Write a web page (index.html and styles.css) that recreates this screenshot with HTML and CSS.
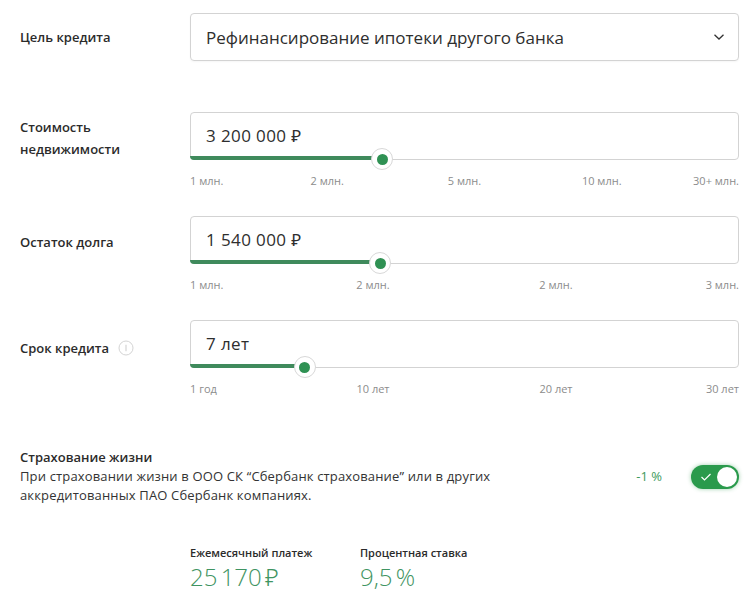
FILE: index.html
```html
<!DOCTYPE html>
<html lang="ru">
<head>
<meta charset="utf-8">
<link rel="stylesheet" href="styles.css">
</head>
<body>
<div class="calc">
  <div class="row row-select">
    <div class="label">Цель кредита</div>
    <div class="field">
      <div class="box select">
        <span class="value">Рефинансирование ипотеки другого банка</span>
        <svg class="chevron" width="12" height="8" viewBox="0 0 12 8"><path d="M1.5 1.8 L6 6 L10.5 1.8" fill="none" stroke="#333" stroke-width="1.3"/></svg>
      </div>
    </div>
  </div>

  <div class="row row-slider">
    <div class="label">Стоимость<br>недвижимости</div>
    <div class="field">
      <div class="box slider">
        <span class="value">3 200 000 ₽</span>
        <div class="fill" style="width:35%"></div>
        <div class="thumb" style="left:35%"></div>
      </div>
      <div class="ticks">
        <span class="tick">1 млн.</span>
        <span class="tick">2 млн.</span>
        <span class="tick">5 млн.</span>
        <span class="tick">10 млн.</span>
        <span class="tick">30+ млн.</span>
      </div>
    </div>
  </div>

  <div class="row row-slider">
    <div class="label">Остаток долга</div>
    <div class="field">
      <div class="box slider">
        <span class="value">1 540 000 ₽</span>
        <div class="fill" style="width:34.6%"></div>
        <div class="thumb" style="left:34.6%"></div>
      </div>
      <div class="ticks">
        <span class="tick">1 млн.</span>
        <span class="tick">2 млн.</span>
        <span class="tick">2 млн.</span>
        <span class="tick">3 млн.</span>
      </div>
    </div>
  </div>

  <div class="row row-slider">
    <div class="label label-info">Срок кредита
      <svg class="info" width="16" height="16" viewBox="0 0 16 16"><circle cx="8" cy="8" r="7" fill="none" stroke="#d4d4d4" stroke-width="1"/><path d="M8 4.8 V11.2" stroke="#d4d4d4" stroke-width="1.2"/></svg>
    </div>
    <div class="field">
      <div class="box slider">
        <span class="value">7 лет</span>
        <div class="fill" style="width:20.8%"></div>
        <div class="thumb" style="left:20.8%"></div>
      </div>
      <div class="ticks">
        <span class="tick">1 год</span>
        <span class="tick">10 лет</span>
        <span class="tick">20 лет</span>
        <span class="tick">30 лет</span>
      </div>
    </div>
  </div>

  <div class="insurance">
    <div class="ins-text">
      <div class="ins-title">Страхование жизни</div>
      <div class="ins-desc">При страховании жизни в ООО СК “Сбербанк страхование” или в других аккредитованных ПАО Сбербанк компаниях.</div>
    </div>
    <div class="discount">-1 %</div>
    <div class="toggle">
      <svg class="check" width="12" height="10" viewBox="0 0 12 10"><path d="M1.5 5 L4.5 8 L10.5 2" fill="none" stroke="#fff" stroke-width="1.2"/></svg>
      <span class="knob"></span>
    </div>
  </div>

  <div class="results">
    <div class="result">
      <div class="res-label">Ежемесячный платеж</div>
      <div class="res-value">25 170 ₽</div>
    </div>
    <div class="result">
      <div class="res-label">Процентная ставка</div>
      <div class="res-value">9,5 %</div>
    </div>
  </div>
</div>
</body>
</html>
```

FILE: styles.css
```css
html, body {
  margin: 0;
  padding: 0;
  background: #fff;
}
body {
  font-family: "Open Sans", "Noto Sans", sans-serif;
  color: #333;
}
.calc {
  width: 719px;
  padding: 13px 0 0 20px;
}
.row {
  display: flex;
}
.row-select {
  margin-bottom: 51px;
}
.row-slider {
  margin-bottom: 28px;
}
.label {
  width: 170px;
  height: 48px;
  display: flex;
  align-items: center;
  font-size: 13px;
  font-weight: 600;
  line-height: 22px;
  color: #2b2b2b;
  padding-top: 3px;
  box-sizing: border-box;
}
.row-select .label {
  padding-top: 0;
}
.label-info {
  gap: 9px;
  padding-top: 7px;
}
.info {
  flex: none;
}
.field {
  width: 549px;
}
.box {
  position: relative;
  height: 48px;
  box-sizing: border-box;
  border: 1px solid #d3d3d3;
  border-radius: 4px;
  display: flex;
  align-items: center;
  padding: 0 15px;
}
.value {
  font-size: 17px;
  color: #2e2e2e;
}
.slider .value {
  margin-top: -2px;
  letter-spacing: 0.4px;
}
.select {
  justify-content: space-between;
  padding-right: 13px;
  box-shadow: 0 1px 2px rgba(0,0,0,0.04);
}
.fill {
  position: absolute;
  left: -1px;
  bottom: -1px;
  height: 4px;
  background: #3f8a5c;
  border-bottom-left-radius: 4px;
}
.thumb {
  position: absolute;
  bottom: -11px;
  width: 22px;
  height: 22px;
  margin-left: -11px;
  box-sizing: border-box;
  border: 1px solid #d8d8d8;
  border-radius: 50%;
  background: #fff;
  display: flex;
  align-items: center;
  justify-content: center;
}
.thumb::after {
  content: "";
  width: 11px;
  height: 11px;
  border-radius: 50%;
  background: #2f9153;
}
.ticks {
  display: flex;
  justify-content: space-between;
  margin-top: 14px;
  height: 14px;
}
.tick {
  width: 0;
  display: flex;
  justify-content: center;
  white-space: nowrap;
  font-size: 11px;
  line-height: 14px;
  color: #8c8c8c;
}
.tick:first-child {
  justify-content: flex-start;
}
.tick:last-child {
  justify-content: flex-end;
}
.insurance {
  display: flex;
  align-items: center;
  margin-top: 52px;
}
.ins-text {
  flex: 1;
}
.ins-title {
  font-size: 13px;
  font-weight: 600;
  line-height: 19px;
  color: #2b2b2b;
}
.ins-desc {
  font-size: 13px;
  line-height: 19px;
  color: #333;
  letter-spacing: 0.15px;
  max-width: 490px;
}
.discount {
  font-size: 13px;
  color: #3d9a5d;
  margin-right: 29px;
  margin-top: -1px;
}
.toggle {
  width: 48px;
  height: 24px;
  border-radius: 12px;
  background: #2a9a4c;
  box-shadow: 0 0 4px rgba(42,154,76,0.45);
  display: flex;
  align-items: center;
  justify-content: space-between;
  padding: 0 2px 0 9px;
  box-sizing: border-box;
}
.knob {
  width: 20px;
  height: 20px;
  border-radius: 50%;
  background: #fff;
}
.results {
  display: flex;
  margin-top: 40px;
  padding-left: 170px;
}
.result {
  width: 170px;
}
.res-label {
  font-size: 11px;
  font-weight: 600;
  line-height: 16px;
  color: #2b2b2b;
}
.res-value {
  font-size: 24px;
  font-weight: 300;
  line-height: 28px;
  color: #3f9462;
  margin-top: 2px;
  word-spacing: -3px;
}
```
